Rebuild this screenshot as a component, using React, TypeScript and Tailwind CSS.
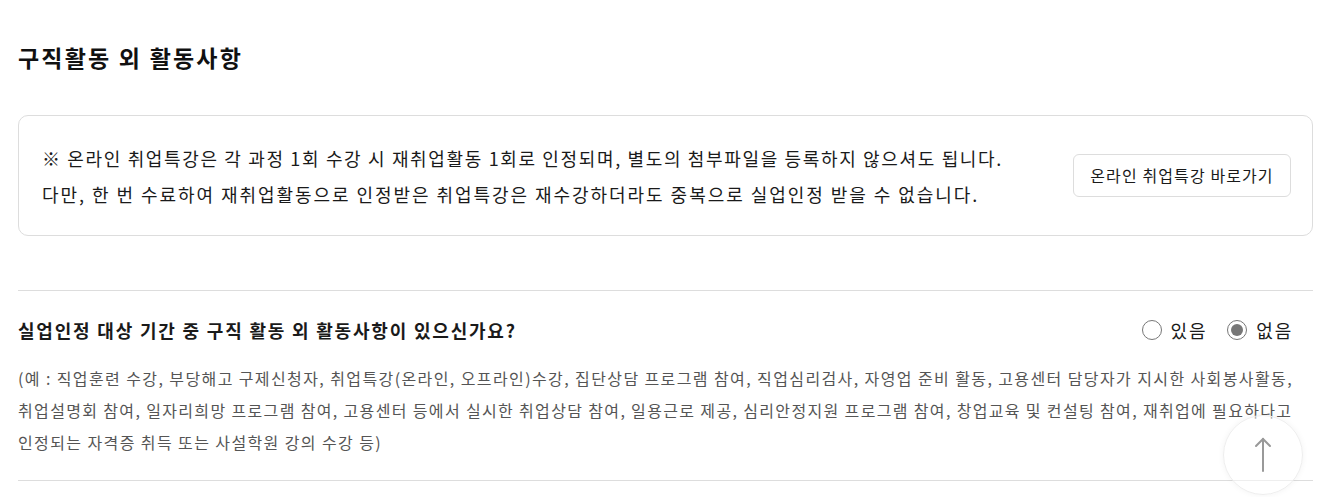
import React from 'react';

const font = { fontFamily: '"Noto Sans CJK KR", "Noto Sans", sans-serif' };

function Radio({ label, checked }: { label: string; checked?: boolean }) {
  return (
    <label className="flex items-center gap-[9px] cursor-pointer">
      <span className="w-[20px] h-[20px] rounded-full border border-[#777] flex items-center justify-center bg-white">
        {checked && <span className="w-[12px] h-[12px] rounded-full bg-[#777]" />}
      </span>
      <span className="text-[18px] tracking-[1.8px] text-[#1a1a1a]">{label}</span>
    </label>
  );
}

export default function App() {
  return (
    <div className="bg-white w-[1334px] h-[497px] overflow-hidden relative" style={font}>
      <div className="pl-[18px] pr-[21px] pt-[37px]">
        <h2 className="text-[23px] font-bold text-[#111] leading-[40px] tracking-[2.2px]">구직활동 외 활동사항</h2>

        <div className="mt-[38px] h-[121px] border border-[#ddd] rounded-[10px] flex items-center justify-between pl-[23px] pr-[21px]">
          <div className="text-[18px] text-[#1a1a1a] leading-[36px] tracking-[1.65px]">
            <p>※ 온라인 취업특강은 각 과정 1회 수강 시 재취업활동 1회로 인정되며, 별도의 첨부파일을 등록하지 않으셔도 됩니다.</p>
            <p className="tracking-[1.95px]">다만, 한 번 수료하여 재취업활동으로 인정받은 취업특강은 재수강하더라도 중복으로 실업인정 받을 수 없습니다.</p>
          </div>
          <button className="h-[43px] w-[218px] border border-[#ddd] rounded-[6px] bg-white text-[16px] tracking-[1.1px] text-[#1a1a1a] mb-[1px]">
            온라인 취업특강 바로가기
          </button>
        </div>

        <div className="mt-[54px] border-t border-[#ddd]">
          <div className="flex items-center justify-between pt-[24px] pr-[20px]">
            <h3 className="text-[18px] font-bold text-[#1a1a1a] leading-[30px] tracking-[1.8px]">실업인정 대상 기간 중 구직 활동 외 활동사항이 있으신가요?</h3>
            <div className="flex items-center gap-[20px]">
              <Radio label="있음" />
              <Radio label="없음" checked />
            </div>
          </div>
          <p className="mt-[17px] text-[16px] text-[#555] leading-[32px] tracking-[1.4px] pb-[22px] whitespace-nowrap">
            (예 : 직업훈련 수강, 부당해고 구제신청자, 취업특강(온라인, 오프라인)수강, 집단상담 프로그램 참여, 직업심리검사, 자영업 준비 활동, 고용센터 담당자가 지시한 사회봉사활동,
            <br />
            <span className="tracking-[1.35px]">취업설명회 참여, 일자리희망 프로그램 참여, 고용센터 등에서 실시한 취업상담 참여, 일용근로 제공, 심리안정지원 프로그램 참여, 창업교육 및 컨설팅 참여, 재취업에 필요하다고</span>
            <br />
            인정되는 자격증 취득 또는 사설학원 강의 수강 등)
          </p>
          <div className="border-t border-[#ddd]" />
        </div>
      </div>

      <button className="absolute left-[1223px] top-[415px] w-[80px] h-[80px] rounded-full bg-white/50 border border-[#eee] shadow-[0_0_6px_rgba(0,0,0,0.05)] flex items-center justify-center">
        <svg width="20" height="36" viewBox="0 0 20 36" fill="none" stroke="#999" strokeWidth="2" strokeLinecap="round">
          <path d="M10 2 V34" />
          <path d="M3 9 L10 2 L17 9" />
        </svg>
      </button>
    </div>
  );
}
